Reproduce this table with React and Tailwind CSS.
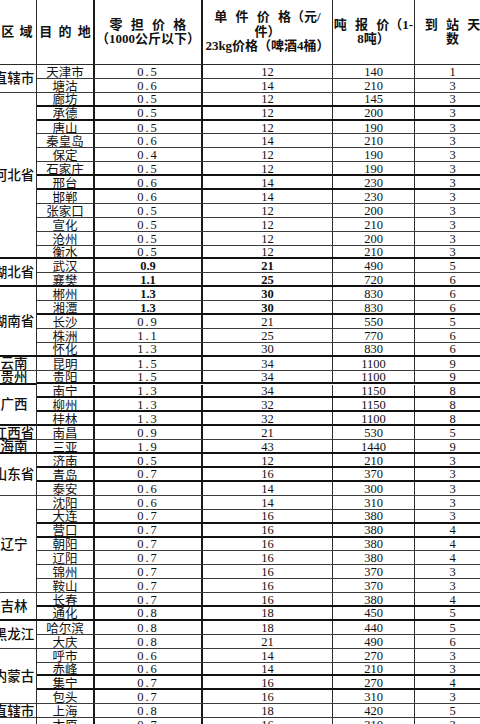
import React from "react";

// dest, 零担, 单件, 吨报价, 天数, bottom line (b = heavy), bold figures
const groups = [
    {
        region: "直辖市",
        rows: [
            ["天津市", "0.5", "12", "140", "1", "t"],
            ["塘沽", "0.6", "14", "210", "3", "t"],
        ],
    },
    {
        region: "河北省",
        rows: [
            ["廊坊", "0.5", "12", "145", "3", "b"],
            ["承德", "0.5", "12", "200", "3", "b"],
            ["唐山", "0.5", "12", "190", "3", "t"],
            ["秦皇岛", "0.6", "14", "210", "3", "t"],
            ["保定", "0.4", "12", "190", "3", "t"],
            ["石家庄", "0.5", "12", "190", "3", "b"],
            ["邢台", "0.6", "14", "230", "3", "b"],
            ["邯郸", "0.6", "14", "230", "3", "t"],
            ["张家口", "0.5", "12", "200", "3", "t"],
            ["宣化", "0.5", "12", "210", "3", "t"],
            ["沧州", "0.5", "12", "200", "3", "t"],
            ["衡水", "0.5", "12", "210", "3", "b"],
        ],
    },
    {
        region: "湖北省",
        rows: [
            ["武汉", "0.9", "21", "490", "5", "t", true],
            ["襄樊", "1.1", "25", "720", "6", "b", true],
        ],
    },
    {
        region: "湖南省",
        rows: [
            ["郴州", "1.3", "30", "830", "6", "t", true],
            ["湘潭", "1.3", "30", "830", "6", "b", true],
            ["长沙", "0.9", "21", "550", "5", "t"],
            ["株洲", "1.1", "25", "770", "6", "t"],
            ["怀化", "1.3", "30", "830", "6", "b"],
        ],
    },
    { region: "云南", rows: [["昆明", "1.5", "34", "1100", "9", "t"]] },
    { region: "贵州", rows: [["贵阳", "1.5", "34", "1100", "9", "b"]] },
    {
        region: "广西",
        rows: [
            ["南宁", "1.3", "34", "1150", "8", "b"],
            ["柳州", "1.3", "32", "1150", "8", "b"],
            ["桂林", "1.3", "32", "1100", "8", "b"],
        ],
    },
    { region: "江西省", rows: [["南昌", "0.9", "21", "530", "5", "t"]] },
    { region: "海南", rows: [["三亚", "1.9", "43", "1440", "9", "b"]] },
    {
        region: "山东省",
        rows: [
            ["济南", "0.5", "12", "210", "3", "b"],
            ["青岛", "0.7", "16", "370", "3", "b"],
            ["泰安", "0.6", "14", "300", "3", "t"],
        ],
    },
    {
        region: "辽宁",
        rows: [
            ["沈阳", "0.6", "14", "310", "3", "t"],
            ["大连", "0.7", "16", "380", "3", "b"],
            ["营口", "0.7", "16", "380", "4", "b"],
            ["朝阳", "0.7", "16", "380", "4", "t"],
            ["辽阳", "0.7", "16", "380", "4", "t"],
            ["锦州", "0.7", "16", "370", "3", "t"],
            ["鞍山", "0.7", "16", "370", "3", "t"],
        ],
    },
    {
        region: "吉林",
        rows: [
            ["长春", "0.7", "16", "380", "4", "b"],
            ["通化", "0.8", "18", "450", "5", "b"],
        ],
    },
    {
        region: "黑龙江",
        rows: [
            ["哈尔滨", "0.8", "18", "440", "5", "t"],
            ["大庆", "0.8", "21", "490", "6", "t"],
        ],
    },
    {
        region: "内蒙古",
        rows: [
            ["呼市", "0.6", "14", "270", "3", "t"],
            ["赤峰", "0.6", "14", "210", "3", "b"],
            ["集宁", "0.7", "16", "270", "4", "b"],
            ["包头", "0.7", "16", "310", "3", "t"],
        ],
    },
    { region: "直辖市", rows: [["上海", "0.8", "18", "420", "5", "t"]] },
    {
        region: "山西省",
        rows: [
            ["太原", "0.7", "16", "310", "3", "t"],
            ["大同", "0.7", "16", "310", "3", "t"],
        ],
    },
];

const Row = ({ row }) => {
    const [dest, part, piece, ton, days, line, bold] = row;
    const border =
        line === "b" ? "border-b-2 border-[#111]" : "border-b border-[#3c3c3c]";
    return (
        <div className={`flex h-[13.9px] items-center text-[12.5px] leading-[10px] ${border}`}>
            <div className="w-[58px] shrink-0 h-full flex items-center justify-center border-r-2 border-[#1a1a1a] pt-[3px]">
                {dest}
            </div>
            <div
                className={`w-[108px] shrink-0 h-full flex items-center justify-center border-r-2 border-[#1a1a1a] pt-[1px] ${
                    bold ? "font-bold" : "tracking-[2px]"
                }`}
            >
                {part}
            </div>
            <div
                className={`w-[130px] shrink-0 h-full flex items-center justify-center border-r border-[#2a2a2a] pt-[1px] ${
                    bold ? "font-bold" : ""
                }`}
            >
                {piece}
            </div>
            <div className="w-[82px] shrink-0 h-full flex items-center justify-center border-r border-[#2a2a2a] pt-[1px]">
                {ton}
            </div>
            <div className="w-[75px] shrink-0 h-full flex items-center justify-center pt-[1px]">
                {days}
            </div>
        </div>
    );
};

const Group = ({ region, rows }) => {
    const last = rows[rows.length - 1][5];
    const border =
        last === "b" ? "border-b-2 border-[#111]" : "border-b border-[#3c3c3c]";
    return (
        <div className="flex">
            <div
                className={`w-[45px] shrink-0 flex items-center justify-center whitespace-nowrap text-[13.5px] leading-[10px] font-medium pt-[2px] border-r border-r-[#2a2a2a] ${border}`}
            >
                {region}
            </div>
            <div className="flex flex-col">
                {rows.map((r) => (
                    <Row key={r[0]} row={r} />
                ))}
            </div>
        </div>
    );
};

const App = () => {
    return (
        <div
            className="w-[480px] h-[724px] overflow-hidden bg-white text-[#111]"
            style={{ fontFamily: '"Liberation Serif", "Noto Sans CJK SC", serif' }}
        >
            <div className="-ml-2 w-[498px]">
                <div className="flex h-[65px] border-b border-[#2a2a2a] text-[13px] font-semibold leading-[14.5px] text-center [word-spacing:5px]">
                    <div className="w-[45px] shrink-0 flex items-center justify-center border-r border-[#2a2a2a] whitespace-nowrap pl-[6px] [word-spacing:2px]">
                        区 域
                    </div>
                    <div className="w-[58px] shrink-0 flex items-center justify-center border-r-2 border-[#1a1a1a] whitespace-nowrap [word-spacing:3px]">
                        目 的 地
                    </div>
                    <div className="w-[108px] shrink-0 flex flex-col items-center justify-center border-r-2 border-[#1a1a1a] whitespace-nowrap">
                        <span>零 担 价 格</span>
                        <span>（1000公斤以下）</span>
                    </div>
                    <div className="w-[130px] shrink-0 flex flex-col items-center justify-center border-r border-[#2a2a2a] whitespace-nowrap">
                        <span>单 件 价 格（元/</span>
                        <span>件）</span>
                        <span>23kg价格（啤酒4桶）</span>
                    </div>
                    <div className="w-[82px] shrink-0 flex flex-col items-center justify-center border-r border-[#2a2a2a] whitespace-nowrap">
                        <span>吨 报 价（1-</span>
                        <span>8吨）</span>
                    </div>
                    <div className="w-[75px] shrink-0 flex flex-col items-center justify-center whitespace-nowrap">
                        <span>到 站 天</span>
                        <span>数</span>
                    </div>
                </div>
                {groups.map((g, i) => (
                    <Group key={i} region={g.region} rows={g.rows} />
                ))}
            </div>
        </div>
    );
};

export default App;
